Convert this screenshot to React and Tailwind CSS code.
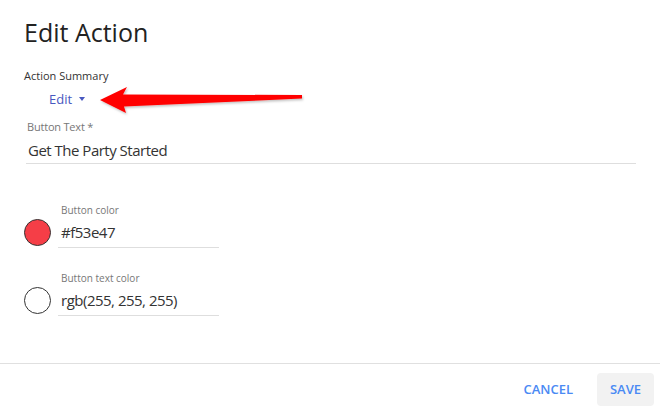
import React from "react";

function ColorField({ label, value, swatch }) {
  return (
    <div className="flex items-end">
      <div
        className="w-[27px] h-[27px] rounded-full border border-[#333] mb-[2px] shrink-0"
        style={{ backgroundColor: swatch }}
      />
      <div className="ml-[7px] w-[161px]">
        <div className="text-[10px] leading-[16px] text-[#777] pl-[3px]">{label}</div>
        <div className="mt-[3px] pb-[4px] border-b border-[#dedede] text-[15px] leading-[22px] tracking-[-0.5px] text-[#333] pl-[3px]">
          {value}
        </div>
      </div>
    </div>
  );
}

export default function App() {
  return (
    <div className="relative w-[660px] h-[409px] bg-white flex flex-col overflow-hidden font-['Open_Sans',sans-serif]">
      {/* Body */}
      <div className="flex-1 pl-6 pt-4">
        <h2 className="text-[25px] leading-[32px] text-[#222] font-normal">Edit Action</h2>

        <div className="mt-[20px] text-[11px] leading-[16px] text-[#333]">Action Summary</div>
        <button className="mt-[5px] ml-[25px] flex items-center gap-[7px] text-[13px] leading-[20px] text-[#4858c0]">
          Edit
          <span className="w-0 h-0 border-l-[3px] border-r-[3px] border-t-[4px] border-l-transparent border-r-transparent border-t-[#4858c0]" />
        </button>

        {/* Button text */}
        <div className="mt-[10px] ml-[2px] w-[610px]">
          <div className="text-[11px] leading-[16px] text-[#777] pl-[1px] tracking-[-0.2px]">Button Text *</div>
          <div className="mt-[4px] pb-[2px] border-b border-[#dedede] text-[15px] leading-[22px] tracking-[-0.5px] text-[#333] pl-[2px]">
            Get The Party Started
          </div>
        </div>

        <div className="mt-[38px] flex flex-col gap-[22px]">
          <ColorField label="Button color" value="#f53e47" swatch="#f53e47" />
          <ColorField label="Button text color" value="rgb(255, 255, 255)" swatch="#ffffff" />
        </div>
      </div>

      {/* Footer */}
      <div className="h-[46px] border-t border-[#e0e0e0] flex items-start justify-end gap-2 pt-[9px] pr-[6px]">
        <button className="h-[33px] px-4 rounded text-[13px] font-semibold text-[#4a8af4]">CANCEL</button>
        <button className="h-[33px] w-[57px] rounded bg-[#f2f2f2] text-[13px] font-semibold text-[#4a8af4]">
          SAVE
        </button>
      </div>

      {/* Annotation arrow */}
      <svg className="absolute left-0 top-0 pointer-events-none" width="660" height="409">
        <defs>
          <filter id="sh" x="-10%" y="-50%" width="120%" height="200%">
            <feDropShadow dx="1" dy="1.5" stdDeviation="1.2" floodColor="#000" floodOpacity="0.25" />
          </filter>
        </defs>
        <polygon
          points="100,100 127,87 123,94.5 302,95 302,98.5 124,106.5 126,113"
          fill="#ff0000"
          filter="url(#sh)"
        />
      </svg>
    </div>
  );
}
